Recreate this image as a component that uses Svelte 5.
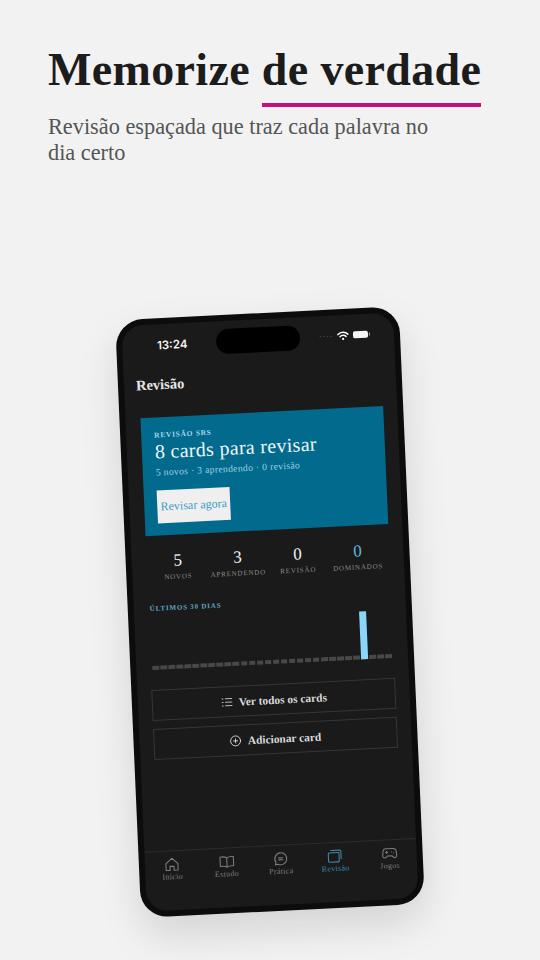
<script>
  const stats = [
    { value: '5', label: 'NOVOS' },
    { value: '3', label: 'APRENDENDO' },
    { value: '0', label: 'REVISÃO' },
    { value: '0', label: 'DOMINADOS', accent: true }
  ]
  const days = Array.from({ length: 30 }, (_, i) => i === 26)
  const tabs = [
    { label: 'Início', icon: 'home' },
    { label: 'Estudo', icon: 'book' },
    { label: 'Prática', icon: 'chat' },
    { label: 'Revisão', icon: 'cards', active: true },
    { label: 'Jogos', icon: 'game' }
  ]
</script>

<main class="page">
  <header class="head">
    <h1>Memorize <span class="mark">de verdade</span></h1>
    <p>Revisão espaçada que traz cada palavra no dia certo</p>
  </header>

  <div class="phone">
    <div class="screen">
      <div class="status">
        <span class="time">13:24</span>
        <span class="island"></span>
        <span class="indicators">
          <span class="signal">····</span>
          <svg width="12" height="10" viewBox="0 0 12 10" fill="none" stroke="#fff" stroke-width="1.5" stroke-linecap="round">
            <path d="M1 3.4a7 7 0 0 1 10 0" />
            <path d="M3 5.6a4.2 4.2 0 0 1 6 0" />
            <circle cx="6" cy="8" r="0.6" fill="#fff" stroke-width="1" />
          </svg>
          <span class="battery"></span>
        </span>
      </div>

      <div class="title">Revisão</div>

      <section class="hero">
        <div class="eyebrow">REVISÃO SRS</div>
        <div class="hero-title">8 cards para revisar</div>
        <div class="hero-sub">5 novos · 3 aprendendo · 0 revisão</div>
        <button class="cta">Revisar agora</button>
      </section>

      <div class="stats">
        {#each stats as s}
          <div class="stat">
            <div class="value" class:accent={s.accent}>{s.value}</div>
            <div class="label">{s.label}</div>
          </div>
        {/each}
      </div>

      <div class="chart-title">ÚLTIMOS 30 DIAS</div>
      <div class="chart">
        {#each days as tall}
          <div class="bar" class:tall></div>
        {/each}
      </div>

      <div class="actions">
        <button class="action">
          <svg width="12" height="12" viewBox="0 0 24 24" fill="none" stroke="#bbb" stroke-width="2" stroke-linecap="round">
            <path d="M9 5h13M9 12h13M9 19h13M2.5 5h2M2.5 12h2M2.5 19h2" />
          </svg>
          Ver todos os cards
        </button>
        <button class="action">
          <svg width="12" height="12" viewBox="0 0 24 24" fill="none" stroke="#ddd" stroke-width="1.8" stroke-linecap="round">
            <circle cx="12" cy="12" r="10" />
            <path d="M12 8v8M8 12h8" />
          </svg>
          Adicionar card
        </button>
      </div>

      <nav class="tabs">
        {#each tabs as t}
          <div class="tab" class:active={t.active}>
            <svg width="16" height="16" viewBox="0 0 24 24" fill="none" stroke="currentColor" stroke-width="1.6" stroke-linecap="round" stroke-linejoin="round">
              {#if t.icon === 'home'}
                <path d="M3 11 12 3l9 8v10h-6v-6H9v6H3z" />
              {:else if t.icon === 'book'}
                <path d="M12 6.5C10 5 6 4.500 2 5v14c4-.5 8 0 10 1.500 2-1.500 6-2 10-1.500V5c-4-.5-8 0-10 1.500zM12 6.500v14" />
              {:else if t.icon === 'chat'}
                <path d="M12 3a9 9 0 1 1-4.300 16.900L3.500 21l1.100-4A9 9 0 0 1 12 3z" />
                <path d="M9 10.500h6M9 13.500h6" />
              {:else if t.icon === 'cards'}
                <rect x="2.500" y="7" width="16" height="14" rx="1.500" />
                <path d="M6.500 3.500h13a2 2 0 0 1 2 2v11" />
              {:else}
                <path d="M7 5h10a5 5 0 0 1 5 5l.5 6a3 3 0 0 1-5.500 1.500L15.500 16h-7L7 17.500A3 3 0 0 1 1.500 16L2 10a5 5 0 0 1 5-5z" />
                <path d="M6 10.500h3M7.500 9v3M15 10h.1M18 11.500h.1" />
              {/if}
            </svg>
            <span>{t.label}</span>
          </div>
        {/each}
      </nav>
    </div>
  </div>
</main>

<style>
  :global(body) {
    margin: 0;
    background: #f2f2f2;
  }
  .page {
    width: 540px;
    height: 960px;
    overflow: hidden;
    background: #f2f2f2;
    font-family: "Liberation Serif", serif;
  }
  .head {
    padding: 42px 48px 0;
  }
  h1 {
    margin: 0;
    font-size: 46px;
    line-height: 56px;
    font-weight: 700;
    letter-spacing: 0.35px;
    color: #1c1c1c;
    white-space: nowrap;
  }
  .mark {
    display: inline-block;
    padding-bottom: 5px;
    border-bottom: 4px solid #c8107c;
  }
  .head p {
    margin: 7px 0 0;
    width: 400px;
    font-size: 22.300px;
    line-height: 26px;
    color: #555;
  }

  .phone {
    box-sizing: border-box;
    width: 284px;
    height: 598px;
    margin: 147px 0 0 128px;
    padding: 6px;
    border-radius: 27px;
    background: #0c0c0c;
    transform: rotate(-2.5deg) skewY(-0.4deg);
    box-shadow: 0 18px 40px rgba(0, 0, 0, 0.13);
  }
  .screen {
    height: 100%;
    border-radius: 21px;
    background: #1b1a1a;
    display: flex;
    flex-direction: column;
    overflow: hidden;
    color: #eee;
  }
  .status {
    height: 24px;
    margin-top: 8px;
    display: grid;
    grid-template-columns: 1fr 84px 1fr;
    align-items: center;
  }
  .time {
    padding-left: 6px;
    text-align: center;
    font-family: Inter, sans-serif;
    font-size: 11.500px;
    font-weight: 600;
    color: #f4f4f4;
  }
  .island {
    height: 25px;
    border-radius: 13px;
    background: #000;
  }
  .indicators {
    padding-right: 26px;
    display: flex;
    align-items: center;
    justify-content: flex-end;
    gap: 4px;
  }
  .signal {
    font-size: 10px;
    line-height: 10px;
    letter-spacing: 0.300px;
    color: #555;
  }
  .battery {
    position: relative;
    width: 15px;
    height: 7px;
    border-radius: 2px;
    background: #f4f4f4;
  }
  .battery::after {
    content: '';
    position: absolute;
    top: 2px;
    right: -2px;
    width: 1px;
    height: 3px;
    background: #999;
  }
  .title {
    margin: 19px 0 0 12px;
    font-size: 14.500px;
    line-height: 18px;
    font-weight: 700;
    color: #e6e6e6;
  }
  .hero {
    margin: 24px 14px 0 15px;
    padding: 13px 13px 12px;
    box-sizing: border-box;
    background: #026a8d;
    flex-shrink: 0;
  }
  .eyebrow {
    font-size: 7.500px;
    line-height: 9px;
    letter-spacing: 0.700px;
    font-weight: 700;
    color: #a4d8ec;
  }
  .hero-title {
    margin-top: 1px;
    font-size: 20px;
    line-height: 22px;
    letter-spacing: 0.300px;
    color: #eef6f8;
  }
  .hero-sub {
    margin-top: 3px;
    font-size: 9.700px;
    line-height: 13px;
    letter-spacing: 0.300px;
    color: #9ccfe2;
  }
  .cta {
    display: block;
    margin-top: 12px;
    width: 73px;
    height: 33px;
    padding: 0;
    border: 0;
    background: #efefef;
    font-family: inherit;
    font-size: 12px;
    color: #3a9cc6;
  }
  .stats {
    margin: 16px 16px 0;
    display: grid;
    grid-template-columns: repeat(4, 1fr);
    text-align: center;
  }
  .value {
    font-size: 17px;
    line-height: 20px;
    color: #f2f2f2;
  }
  .value.accent {
    color: #5fb6dc;
  }
  .label {
    margin-top: 2px;
    font-size: 7px;
    line-height: 9px;
    letter-spacing: 0.800px;
    color: #8a8a8a;
  }
  .chart-title {
    margin: 22px 0 0 16px;
    font-size: 7px;
    line-height: 9px;
    letter-spacing: 0.800px;
    font-weight: 700;
    color: #5fa9c8;
  }
  .chart {
    margin: 6px 16px 0;
    height: 50px;
    display: flex;
    align-items: flex-end;
    gap: 1.500px;
  }
  .bar {
    flex: 1;
    height: 4px;
    background: #484848;
  }
  .bar.tall {
    height: 48px;
    background: #8ad6f8;
  }
  .actions {
    margin: 20px 14px 0;
    display: flex;
    flex-direction: column;
    gap: 8px;
  }
  .action {
    height: 31px;
    padding: 0;
    display: flex;
    align-items: center;
    justify-content: center;
    gap: 6px;
    background: none;
    border: 1px solid #363636;
    font-family: inherit;
    font-size: 11.400px;
    font-weight: 700;
    color: #d8d8d8;
  }
  .tabs {
    margin-top: auto;
    height: 60px;
    box-sizing: border-box;
    padding-top: 5px;
    border-top: 1px solid #2c2c2c;
    display: grid;
    grid-template-columns: repeat(5, 1fr);
  }
  .tab {
    display: flex;
    flex-direction: column;
    align-items: center;
    font-size: 8px;
    line-height: 10px;
    letter-spacing: 0.300px;
    color: #7c7c7c;
  }
  .tab.active {
    color: #3f89ab;
  }
</style>
